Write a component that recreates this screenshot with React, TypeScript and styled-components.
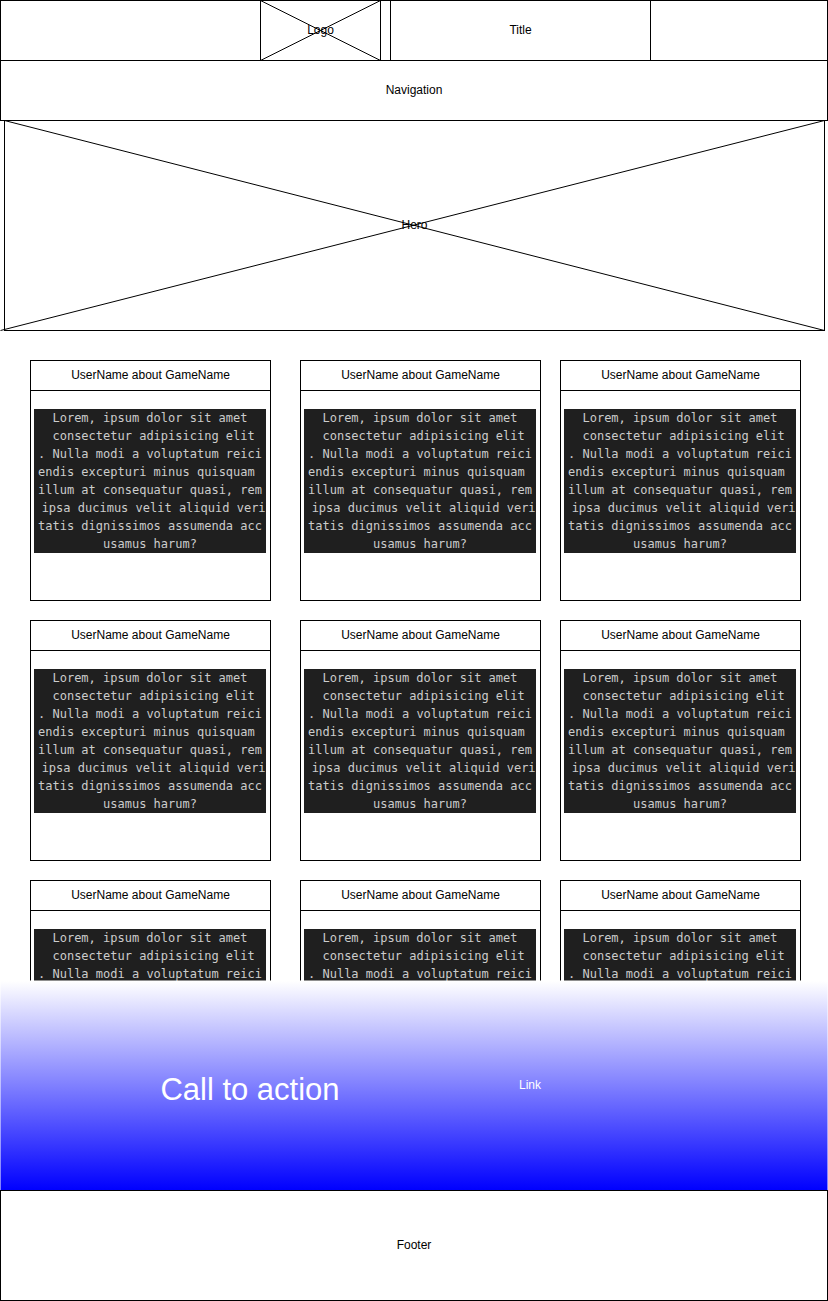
import React from 'react';
import styled, { createGlobalStyle } from 'styled-components';

const GlobalStyle = createGlobalStyle`
  *, *::before, *::after { box-sizing: border-box; }
  body {
    margin: 0;
    background: #fff;
    color: #000;
    font: 12px/18px 'Liberation Sans', Arial, sans-serif;
  }
  h1, h2, h3, p, pre { margin: 0; font: inherit; }
`;

const Header = styled.header`
  display: grid;
  grid-template-columns: 259fr 121px 9px 261px 176fr;
  height: 61px;
  border: 1px solid #000;
`;

const Placeholder = styled.div`
  position: relative;
  display: flex;
  align-items: center;
  justify-content: center;
  padding-bottom: 2px;
`;

const Logo = styled(Placeholder)`
  grid-column: 2;
  border: solid #000;
  border-width: 0 1px;
`;

const Title = styled.h1`
  grid-column: 4;
  display: flex;
  align-items: center;
  justify-content: center;
  && { padding-bottom: 2px; }
  border: solid #000;
  border-width: 0 1px;
`;

const Navigation = styled.nav`
  display: flex;
  align-items: center;
  justify-content: center;
  height: 61px;
  margin-top: -1px;
  padding-bottom: 2px;
  border: 1px solid #000;
`;

const Hero = styled(Placeholder)`
  height: 211px;
  margin: -1px 3px 0 4px;
  border: 1px solid #000;
`;

const CrossLines = styled.svg`
  position: absolute;
  inset: 0;
  width: 100%;
  height: 100%;
  overflow: visible;
  stroke: #000;
`;

const Reviews = styled.main`
  display: grid;
  grid-template-columns: minmax(0, 1fr) 29px minmax(0, 1fr) 19px minmax(0, 1fr);
  grid-auto-rows: 241px;
  row-gap: 19px;
  height: 650px;
  padding: 29px 27px 0 30px;
  overflow: hidden;
`;

const Card = styled.article`
  display: flex;
  flex-direction: column;
  border: 1px solid #000;

  &:nth-child(3n + 1) { grid-column: 1; }
  &:nth-child(3n + 2) { grid-column: 3; }
  &:nth-child(3n) { grid-column: 5; }
`;

const CardTitle = styled.h2`
  height: 30px;
  border-bottom: 1px solid #000;
  line-height: 28px;
  text-align: center;
`;

const CardText = styled.pre`
  margin: 18px 4px 0 3px;
  background: #1f1f1f;
  color: #ccc;
  font: 12px/18px 'DejaVu Sans Mono', monospace;
  text-align: center;
  white-space: pre;
`;

const CallToAction = styled.section`
  position: relative;
  display: grid;
  grid-template-columns: 140fr 220px 140fr 60px 268fr;
  align-items: start;
  height: 210px;
  margin-top: -1px;
  padding-top: 90px;
  border-top: 1px solid rgba(255, 255, 255, 0.5);
  background: linear-gradient(#fff, #00f) padding-box;
  box-shadow: inset 1px 0 rgba(255, 255, 255, 0.5), inset -1px 0 rgba(255, 255, 255, 0.5);
  color: #fff;
  text-align: center;
`;

const CallTitle = styled.h2`
  grid-column: 2;
  font-size: 31px;
  line-height: 38px;
`;

const CallLink = styled.a`
  grid-column: 4;
  color: inherit;
  line-height: 28px;
  text-decoration: none;
`;

const Footer = styled.footer`
  display: flex;
  align-items: center;
  justify-content: center;
  height: 111px;
  padding-bottom: 2px;
  border: 1px solid #000;
`;

const reviewText = [
  'Lorem, ipsum dolor sit amet',
  ' consectetur adipisicing elit',
  '. Nulla modi a voluptatum reici',
  'endis excepturi minus quisquam ',
  'illum at consequatur quasi, rem',
  ' ipsa ducimus velit aliquid veri',
  'tatis dignissimos assumenda acc',
  'usamus harum?',
].join('\n');

const reviews = Array.from({ length: 9 }, (_, id) => ({
  id,
  title: 'UserName about GameName',
  text: reviewText,
}));

function LogoCross() {
  return (
    <CrossLines viewBox="0 0 119 59" preserveAspectRatio="none" aria-hidden="true">
      <path d="M-.5-.5l120 60M119.5-.5l-120 60" />
    </CrossLines>
  );
}

function HeroCross() {
  return (
    <CrossLines viewBox="0 0 819 209" preserveAspectRatio="none" aria-hidden="true">
      <path d="M-.5-.5l820 210M819.5-.5L-4.5 209.5" />
    </CrossLines>
  );
}

export default function App() {
  return (
    <>
      <GlobalStyle />
      <Header>
        <Logo>
          <LogoCross />
          Logo
        </Logo>
        <Title>Title</Title>
      </Header>
      <Navigation>Navigation</Navigation>
      <Hero>
        <HeroCross />
        Hero
      </Hero>
      <Reviews>
        {reviews.map((review) => (
          <Card key={review.id}>
            <CardTitle>{review.title}</CardTitle>
            <CardText>{review.text}</CardText>
          </Card>
        ))}
      </Reviews>
      <CallToAction>
        <CallTitle>Call to action</CallTitle>
        <CallLink href="#">Link</CallLink>
      </CallToAction>
      <Footer>Footer</Footer>
    </>
  );
}
